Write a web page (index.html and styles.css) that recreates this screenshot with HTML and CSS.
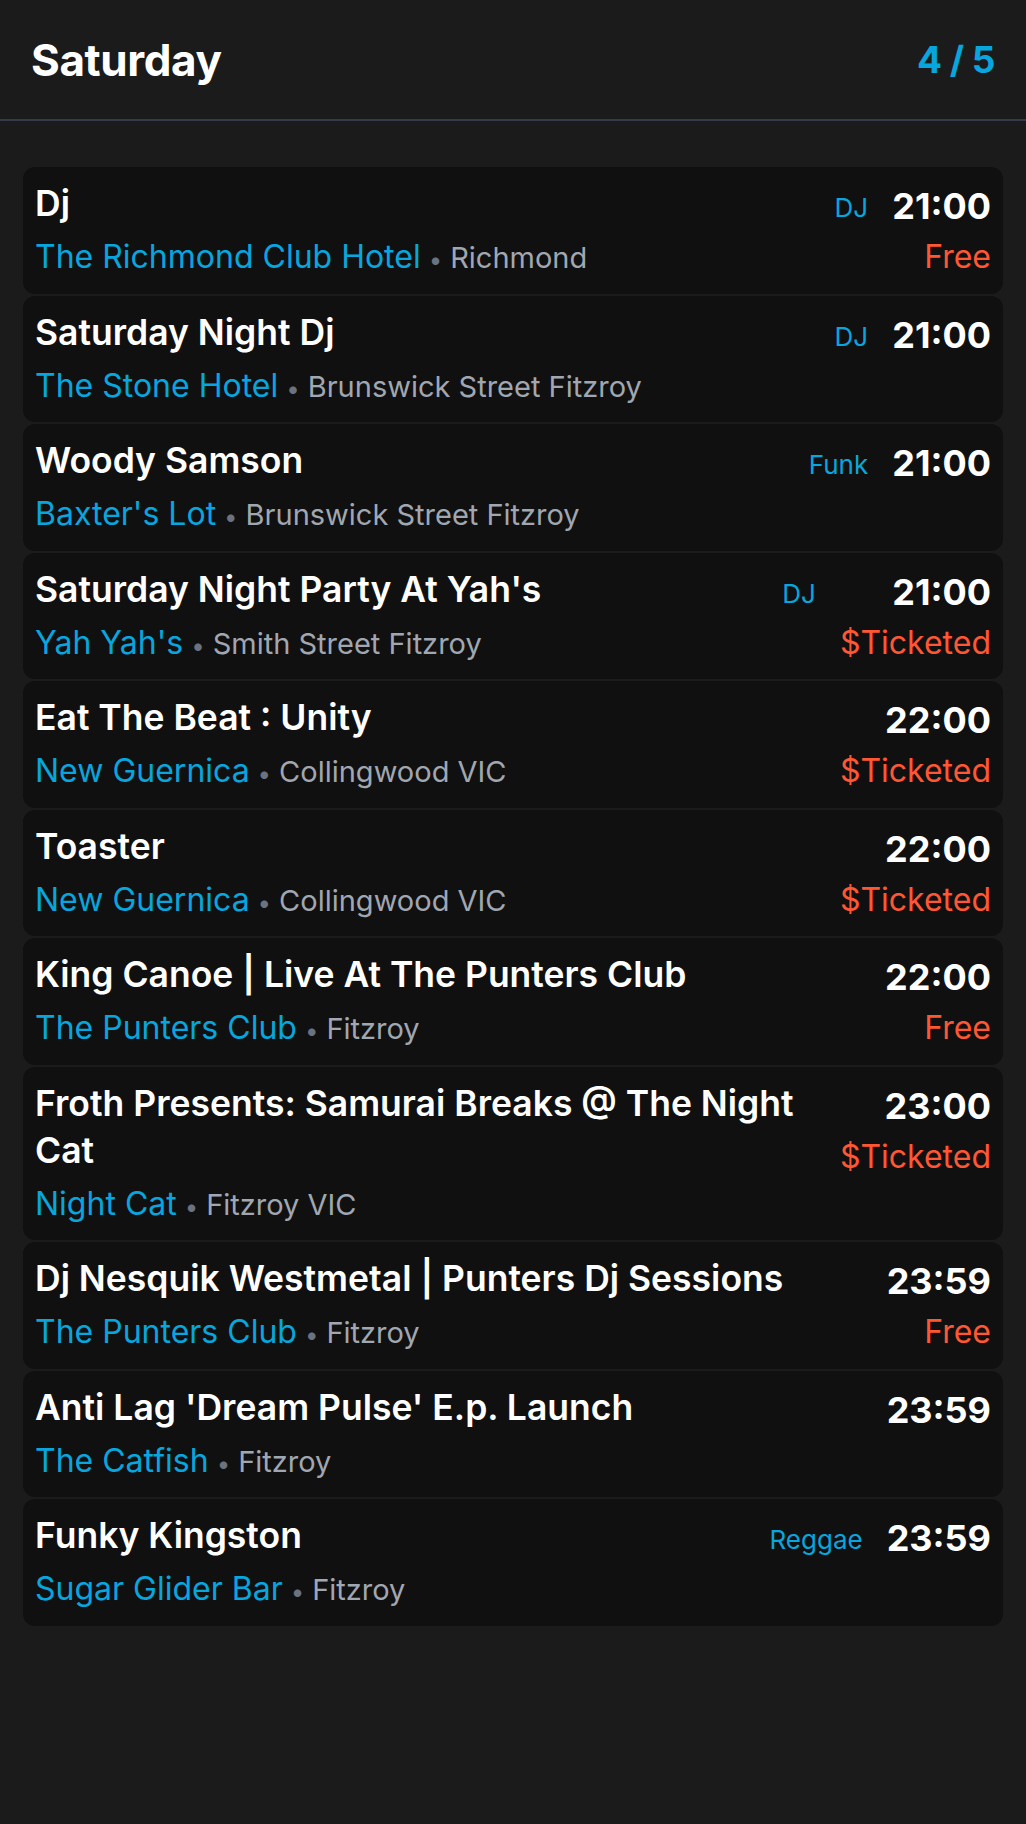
FILE: index.html
```html
<!DOCTYPE html>
<html lang="en">
<head>
<meta charset="utf-8">
<title>Saturday</title>
<link rel="stylesheet" href="styles.css">
</head>
<body>
<div class="page">
  <header class="day-header">
    <h1 class="day-title">Saturday</h1>
    <span class="day-count">4 / 5</span>
  </header>
  <ul class="events">
    <li class="event">
      <div class="info"><div class="title">Dj</div><div class="venue"><span class="venue-name">The Richmond Club Hotel</span><span class="sep">•</span><span class="loc">Richmond</span></div></div>
      <span class="tag">DJ</span>
      <div class="when"><div class="time">21:00</div><div class="price">Free</div></div>
    </li>
    <li class="event">
      <div class="info"><div class="title">Saturday Night Dj</div><div class="venue"><span class="venue-name">The Stone Hotel</span><span class="sep">•</span><span class="loc">Brunswick Street Fitzroy</span></div></div>
      <span class="tag">DJ</span>
      <div class="when"><div class="time">21:00</div></div>
    </li>
    <li class="event">
      <div class="info"><div class="title">Woody Samson</div><div class="venue"><span class="venue-name">Baxter's Lot</span><span class="sep">•</span><span class="loc">Brunswick Street Fitzroy</span></div></div>
      <span class="tag">Funk</span>
      <div class="when"><div class="time">21:00</div></div>
    </li>
    <li class="event">
      <div class="info"><div class="title">Saturday Night Party At Yah's</div><div class="venue"><span class="venue-name">Yah Yah's</span><span class="sep">•</span><span class="loc">Smith Street Fitzroy</span></div></div>
      <span class="tag">DJ</span>
      <div class="when"><div class="time">21:00</div><div class="price">$Ticketed</div></div>
    </li>
    <li class="event">
      <div class="info"><div class="title">Eat The Beat : Unity</div><div class="venue"><span class="venue-name">New Guernica</span><span class="sep">•</span><span class="loc">Collingwood VIC</span></div></div>
      <div class="when"><div class="time">22:00</div><div class="price">$Ticketed</div></div>
    </li>
    <li class="event">
      <div class="info"><div class="title">Toaster</div><div class="venue"><span class="venue-name">New Guernica</span><span class="sep">•</span><span class="loc">Collingwood VIC</span></div></div>
      <div class="when"><div class="time">22:00</div><div class="price">$Ticketed</div></div>
    </li>
    <li class="event">
      <div class="info"><div class="title">King Canoe | Live At The Punters Club</div><div class="venue"><span class="venue-name">The Punters Club</span><span class="sep">•</span><span class="loc">Fitzroy</span></div></div>
      <div class="when"><div class="time">22:00</div><div class="price">Free</div></div>
    </li>
    <li class="event">
      <div class="info"><div class="title">Froth Presents: Samurai Breaks @ The Night Cat</div><div class="venue"><span class="venue-name">Night Cat</span><span class="sep">•</span><span class="loc">Fitzroy VIC</span></div></div>
      <div class="when"><div class="time">23:00</div><div class="price">$Ticketed</div></div>
    </li>
    <li class="event">
      <div class="info"><div class="title">Dj Nesquik Westmetal | Punters Dj Sessions</div><div class="venue"><span class="venue-name">The Punters Club</span><span class="sep">•</span><span class="loc">Fitzroy</span></div></div>
      <div class="when"><div class="time">23:59</div><div class="price">Free</div></div>
    </li>
    <li class="event">
      <div class="info"><div class="title">Anti Lag 'Dream Pulse' E.p. Launch</div><div class="venue"><span class="venue-name">The Catfish</span><span class="sep">•</span><span class="loc">Fitzroy</span></div></div>
      <div class="when"><div class="time">23:59</div></div>
    </li>
    <li class="event">
      <div class="info"><div class="title">Funky Kingston</div><div class="venue"><span class="venue-name">Sugar Glider Bar</span><span class="sep">•</span><span class="loc">Fitzroy</span></div></div>
      <span class="tag">Reggae</span>
      <div class="when"><div class="time">23:59</div></div>
    </li>
  </ul>
</div>
</body>
</html>
```

FILE: styles.css
```css
* { box-sizing: border-box; }

html, body {
  margin: 0;
  padding: 0;
  background: #1b1b1b;
}

body {
  font-family: Inter, "Noto Sans", "Liberation Sans", sans-serif;
  color: #ffffff;
}

.page {
  min-height: 1824px;
  background: #1b1b1b;
}

.day-header {
  height: 121px;
  display: flex;
  align-items: center;
  justify-content: space-between;
  padding: 0 31px 0 31px;
  border-bottom: 2px solid #343c4a;
}

.day-title {
  margin: 0;
  font-size: 44px;
  font-weight: 700;
  letter-spacing: -0.4px;
}

.day-count {
  font-size: 37px;
  font-weight: 700;
  letter-spacing: -0.5px;
  color: #07a6de;
}

.events {
  list-style: none;
  margin: 46px 23px 0 23px;
  padding: 0;
  display: flex;
  flex-direction: column;
  gap: 2px;
}

.event {
  display: flex;
  align-items: flex-start;
  background: #101010;
  border-radius: 12px;
  padding: 13px 12px 12.5px 12px;
}

.info {
  flex: 1;
  min-width: 0;
}

.title {
  font-size: 35.5px;
  font-weight: 600;
  line-height: 47px;
}

.venue {
  margin-top: 6px;
  height: 48px;
  font-size: 32px;
  line-height: 48px;
  white-space: nowrap;
}

.venue span {
  line-height: 1;
}

.venue-name {
  font-size: 32px;
  color: #07a6de;
}

.sep {
  font-size: 24px;
  color: #6b7280;
  margin: 0 8px;
}

.loc {
  font-size: 29px;
  color: #a1a7b1;
}

.tag {
  font-size: 26px;
  color: #07a6de;
  line-height: 46px;
  padding-top: 5px;
  margin-left: 24px;
  margin-right: 24px;
}

.when {
  margin-left: 24px;
  text-align: right;
}

.tag + .when {
  margin-left: 0;
}

.time {
  font-size: 36px;
  font-weight: 700;
  line-height: 46px;
  padding-top: 3px;
}

.price {
  margin-top: 4px;
  font-size: 32px;
  line-height: 48px;
  color: #ff5733;
}
```
